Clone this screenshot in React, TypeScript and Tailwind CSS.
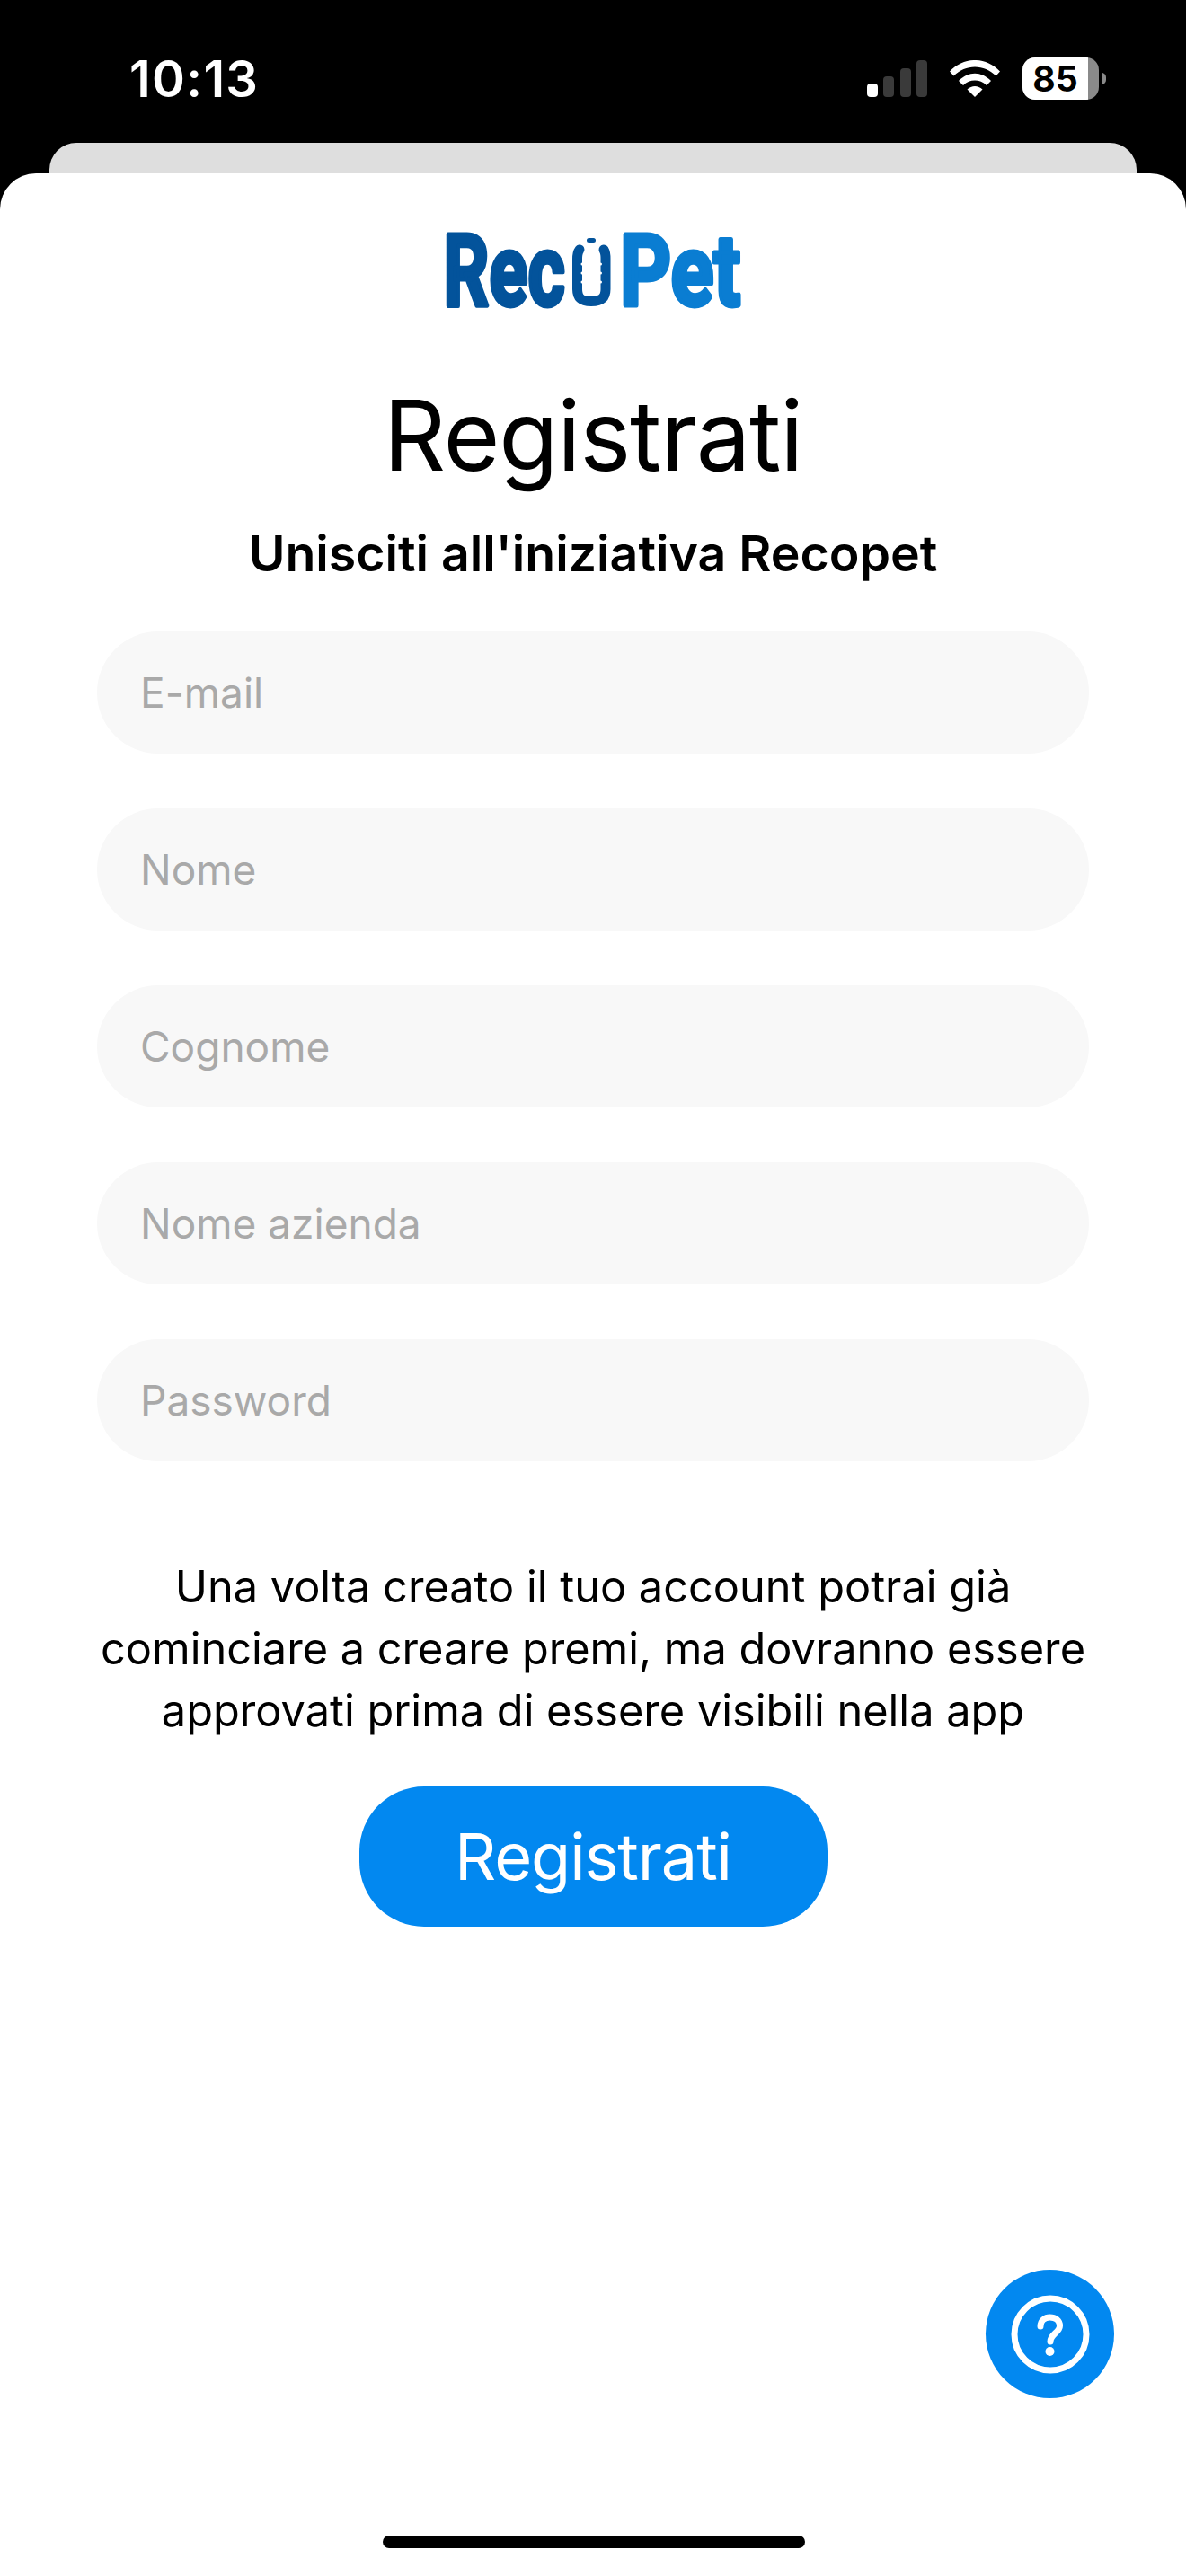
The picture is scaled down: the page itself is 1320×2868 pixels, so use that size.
const fields = ['E-mail', 'Nome', 'Cognome', 'Nome azienda', 'Password'];

// --- STATUS BAR ---

const SignalIcon = () => (
  <svg width="67" height="41" viewBox="0 0 67 41" className="block">
    <rect x="0" y="26" width="12" height="15" rx="4" fill="#fff" />
    <rect x="18" y="18" width="12" height="23" rx="4" fill="#3a3a3a" />
    <rect x="37" y="9" width="12" height="32" rx="4" fill="#3a3a3a" />
    <rect x="55" y="0" width="12" height="41" rx="4" fill="#3a3a3a" />
  </svg>
);

const WifiIcon = () => (
  <svg width="56" height="41" viewBox="0 0 56 41" className="block">
    <path d="M0 12.5C15.500 -4.200 40.500 -4.200 56 12.500L51.500 17.500C38.500 4 17.500 4 4.500 17.500Z" fill="#fff" />
    <path d="M10 23C21 12 35 12 46 23L41 28C33.500 20.800 22.500 20.800 15 28Z" fill="#fff" />
    <path d="M19.500 32.500C24.500 27.800 31.500 27.800 36.500 32.500L28 41Z" fill="#fff" />
  </svg>
);

const BatteryIcon = () => (
  <div className="flex items-center gap-[3px]">
    <div className="relative flex h-[47px] w-[85px] items-center overflow-hidden rounded-[14px] bg-[#8a8a8a]">
      <div className="flex h-full w-[73px] items-center justify-center bg-white text-[39px] font-bold leading-none text-black">85</div>
    </div>
    <div className="h-[13px] w-[5px] rounded-r-full bg-[#8a8a8a]" />
  </div>
);

// --- FORMULAIRE ---

const Field = ({ label }: { label: string }) => (
  <div className="flex h-[136px] w-[1104px] items-center rounded-full bg-[#f8f8f8] pl-[48px] text-[46px] leading-none text-[#a9a9a9]">
    {label}
  </div>
);

const Logo = () => (
  <svg width="340" height="110" viewBox="0 0 340 110" className="block" role="img" aria-label="RecoPet">
    <svg x="0" y="0" width="142" height="110" viewBox="0 0 200 110" preserveAspectRatio="none">
      <text x="5" y="98" fontFamily="Roboto, sans-serif" fontWeight="700" fontSize="112" fill="#03539b" stroke="#03539b" strokeWidth="5" strokeLinejoin="round">
        Rec
      </text>
    </svg>
    {/* bouteille a la place du o */}
    <path
      d="M155 36C152 40 152.500 45 152.500 48V80C152.500 92 160 93.500 168 93.500C176 93.500 184 92 184 80V48C184 45 184.500 40 182 36"
      fill="none"
      stroke="#03539b"
      strokeWidth="11"
      strokeLinecap="round"
    />
    <rect x="163" y="23" width="10" height="5" rx="2.500" fill="#03539b" />
    {[52, 62, 72].map((y) => (
      <g key={y} fill="#fff">
        <circle cx="158" cy={y} r="1.500" />
        <circle cx="178.500" cy={y} r="1.500" />
      </g>
    ))}
    <svg x="196" y="0" width="144" height="110" viewBox="0 0 182 110" preserveAspectRatio="none">
      <text x="5" y="98" fontFamily="Roboto, sans-serif" fontWeight="700" fontSize="112" fill="#0a7dd2" stroke="#0a7dd2" strokeWidth="5" strokeLinejoin="round">
        Pet
      </text>
    </svg>
  </svg>
);

const HelpIcon = () => (
  <svg width="88" height="88" viewBox="0 0 88 88" fill="none" className="block">
    <circle cx="44" cy="44" r="40" stroke="#fff" strokeWidth="7" />
    <path d="M33 35C33 28.500 38 25 43.500 25C49.500 25 54.500 28.500 54.500 34.500C54.500 42 44 43.500 44 52" stroke="#fff" strokeWidth="7" strokeLinecap="round" />
    <circle cx="43.500" cy="63" r="5" fill="#fff" />
  </svg>
);

export default function App() {
  return (
    <div className="relative h-[2868px] w-[1320px] overflow-hidden bg-black font-['Inter',sans-serif]">
      {/* STATUS BAR */}
      <div className="flex h-[159px] items-start justify-between pl-[144px] pr-[89px] pt-[64px] text-white">
        <span className="text-[56px] font-semibold leading-[48px] tracking-[1.3px]">10:13</span>
        <div className="flex items-center">
          <SignalIcon />
          <div className="ml-[25px] mr-[25px]">
            <WifiIcon />
          </div>
          <BatteryIcon />
        </div>
      </div>

      {/* FEUILLE ARRIERE */}
      <div className="mx-[55px] h-[34px] rounded-t-[30px] bg-[#dedede]" />

      {/* FEUILLE */}
      <div className="flex h-[2675px] flex-col items-center rounded-t-[40px] bg-white pt-[49px]">
        <Logo />
        <h1 className="mt-[78px] text-[108px] font-normal leading-[110px] tracking-[-1.2px] text-black">Registrati</h1>
        <p className="mt-[43px] text-[55.4px] font-semibold leading-[66px] text-black">Unisciti all'iniziativa Recopet</p>

        <div className="mt-[54px] flex flex-col gap-[61px]">
          {fields.map((f) => (
            <Field key={f} label={f} />
          ))}
        </div>

        <p className="mt-[105px] w-[1150px] text-center text-[48.7px] leading-[69px] text-black">
          Una volta creato il tuo account potrai già
          <br />
          cominciare a creare premi, ma dovranno essere
          <br />
          approvati prima di essere visibili nella app
        </p>

        <button className="mt-[50px] flex h-[156px] w-[521px] items-center justify-center rounded-[72px] bg-[#0288f0] text-[72px] font-normal leading-none tracking-[-1.1px] text-white">
          Registrati
        </button>
      </div>

      {/* AIDE */}
      <button className="absolute left-[1097px] top-[2527px] flex h-[143px] w-[143px] items-center justify-center rounded-full bg-[#0288f0]">
        <HelpIcon />
      </button>

      <div className="absolute bottom-[31px] left-[426px] h-[14px] w-[470px] rounded-full bg-black" />
    </div>
  );
}
